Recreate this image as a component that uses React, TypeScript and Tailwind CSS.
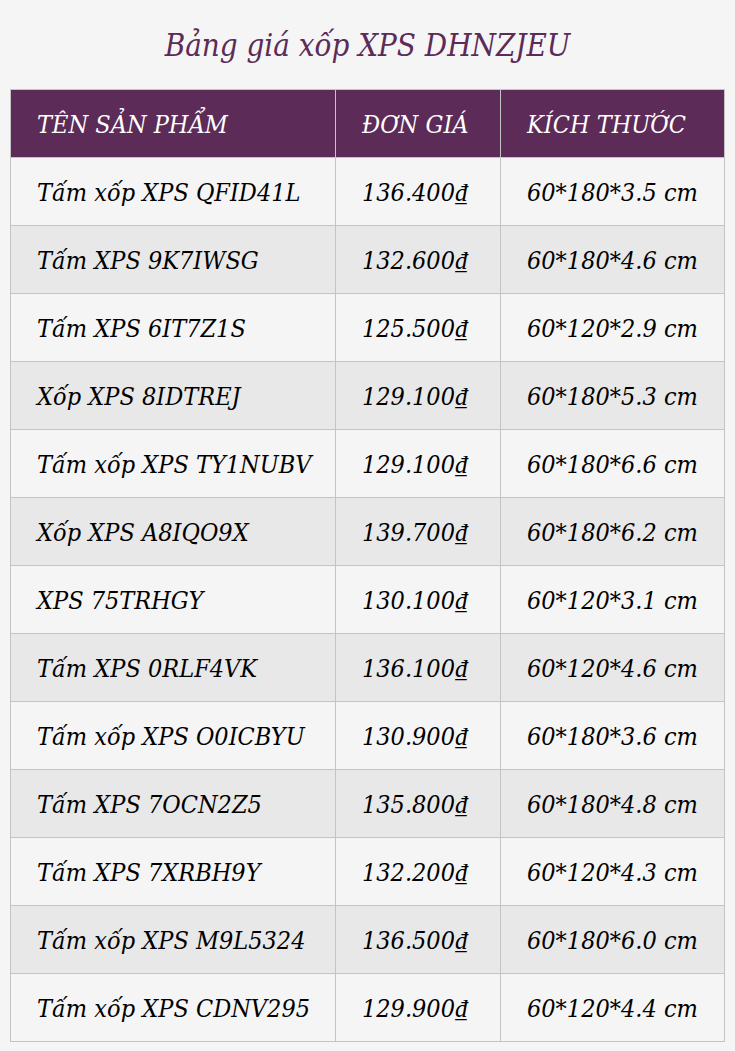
const rows = [
  ['Tấm xốp XPS QFID41L', '136.400₫', '60*180*3.5 cm'],
  ['Tấm XPS 9K7IWSG', '132.600₫', '60*180*4.6 cm'],
  ['Tấm XPS 6IT7Z1S', '125.500₫', '60*120*2.9 cm'],
  ['Xốp XPS 8IDTREJ', '129.100₫', '60*180*5.3 cm'],
  ['Tấm xốp XPS TY1NUBV', '129.100₫', '60*180*6.6 cm'],
  ['Xốp XPS A8IQO9X', '139.700₫', '60*180*6.2 cm'],
  ['XPS 75TRHGY', '130.100₫', '60*120*3.1 cm'],
  ['Tấm XPS 0RLF4VK', '136.100₫', '60*120*4.6 cm'],
  ['Tấm xốp XPS O0ICBYU', '130.900₫', '60*180*3.6 cm'],
  ['Tấm XPS 7OCN2Z5', '135.800₫', '60*180*4.8 cm'],
  ['Tấm XPS 7XRBH9Y', '132.200₫', '60*120*4.3 cm'],
  ['Tấm xốp XPS M9L5324', '136.500₫', '60*180*6.0 cm'],
  ['Tấm xốp XPS CDNV295', '129.900₫', '60*120*4.4 cm'],
];

export default function App() {
  return (
    <div
      className="min-h-screen bg-[#f5f5f5] px-[10px] pt-[22px] italic"
      style={{ fontFamily: '"DejaVu Serif Condensed", "DejaVu Serif", serif' }}
    >
      <h1 className="text-center text-[31px] leading-[46px] text-[#5c2b57] mb-[21px]">
        Bảng giá xốp XPS DHNZJEU
      </h1>
      <table className="w-[715px] border-collapse text-[25px] text-black">
        <thead>
          <tr className="bg-[#5c2b57] text-white h-[68px]">
            <th className="w-[325px] border border-[#c4c4c4] pl-[26px] pt-[3px] text-left font-normal">TÊN SẢN PHẨM</th>
            <th className="w-[165px] border border-[#c4c4c4] pl-[26px] pt-[3px] text-left font-normal">ĐƠN GIÁ</th>
            <th className="border border-[#c4c4c4] pl-[26px] pt-[3px] text-left font-normal">KÍCH THƯỚC</th>
          </tr>
        </thead>
        <tbody>
          {rows.map((r, i) => (
            <tr key={i} className={`h-[68px] ${i % 2 === 0 ? 'bg-[#f5f5f5]' : 'bg-[#e8e8e8]'}`}>
              <td className="border border-[#c4c4c4] pl-[26px] pt-[3px]">{r[0]}</td>
              <td className="border border-[#c4c4c4] pl-[26px] pt-[3px]">{r[1]}</td>
              <td className="border border-[#c4c4c4] pl-[26px] pt-[3px]">{r[2]}</td>
            </tr>
          ))}
        </tbody>
      </table>
    </div>
  );
}
